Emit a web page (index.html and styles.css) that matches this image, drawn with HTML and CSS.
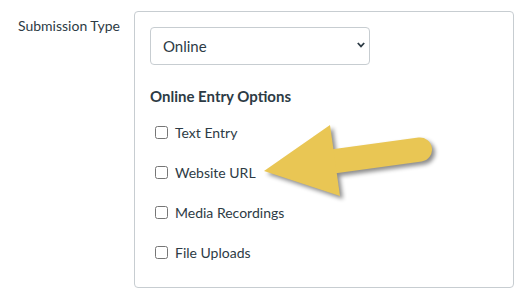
FILE: index.html
```html
<!DOCTYPE html>
<html>
<head>
<meta charset="utf-8">
<link rel="stylesheet" href="styles.css">
</head>
<body>
<div class="row">
  <div class="label">Submission Type</div>
  <div class="panel">
    <div class="select-wrap">
      <select class="select"><option>Online</option></select>
      <svg class="chev" width="8" height="6" viewBox="0 0 8 6"><path d="M0.8 1 L4 4.4 L7.2 1" fill="none" stroke="#2d3b45" stroke-width="1.8"/></svg>
    </div>
    <div class="heading">Online Entry Options</div>
    <label class="opt"><input type="checkbox"><span>Text Entry</span></label>
    <label class="opt"><input type="checkbox"><span>Website URL</span></label>
    <label class="opt"><input type="checkbox"><span>Media Recordings</span></label>
    <label class="opt"><input type="checkbox"><span>File Uploads</span></label>
  </div>
</div>
<svg class="arrow" width="528" height="290" viewBox="0 0 528 290">
  <g fill="#e9c654">
    <line x1="336" y1="161" x2="420" y2="149.5" stroke="#e9c654" stroke-width="24" stroke-linecap="round"/>
    <polygon points="264,171 330,125 340,196"/>
  </g>
</svg>
</body>
</html>
```
FILE: styles.css
```css
html, body { margin: 0; padding: 0; background: #fff; }
body {
  font-family: Lato, "Liberation Sans", sans-serif;
  color: #2d3b45;
  width: 528px;
  height: 290px;
  overflow: hidden;
  position: relative;
}
.row {
  display: flex;
  padding: 11px 0 0 18px;
}
.label {
  width: 116px;
  font-size: 14px;
  line-height: 20px;
  padding-top: 5px;
}
.panel {
  border: 1px solid #c7cdd1;
  border-radius: 4px;
  padding: 15px 0 0 15px;
  box-sizing: border-box;
  width: 380px;
  height: 277px;
}
.select-wrap {
  position: relative;
  width: 220px;
  height: 38px;
}
.select {
  appearance: none;
  -webkit-appearance: none;
  width: 220px;
  height: 38px;
  border: 1px solid #c7cdd1;
  border-radius: 4px;
  background: #fff;
  font-family: Lato, "Liberation Sans", sans-serif;
  font-size: 15px;
  color: #2d3b45;
  padding: 0 0 0 12px;
  margin: 0;
}
.chev {
  position: absolute;
  left: 207px;
  top: 15px;
}
.heading {
  font-weight: bold;
  font-size: 15px;
  line-height: 20px;
  margin-top: 21px;
  margin-bottom: 16px;
}
.opt {
  display: flex;
  align-items: center;
  height: 40px;
  font-size: 14px;
  margin-top: -10px;
  margin-bottom: 10px;
}
.opt input {
  width: 13px;
  height: 13px;
  margin: 0 7px 0 5px;
}
.arrow {
  position: absolute;
  left: 0;
  top: 0;
  filter: drop-shadow(3px 3px 2px rgba(0,0,0,0.45));
  pointer-events: none;
}
```
